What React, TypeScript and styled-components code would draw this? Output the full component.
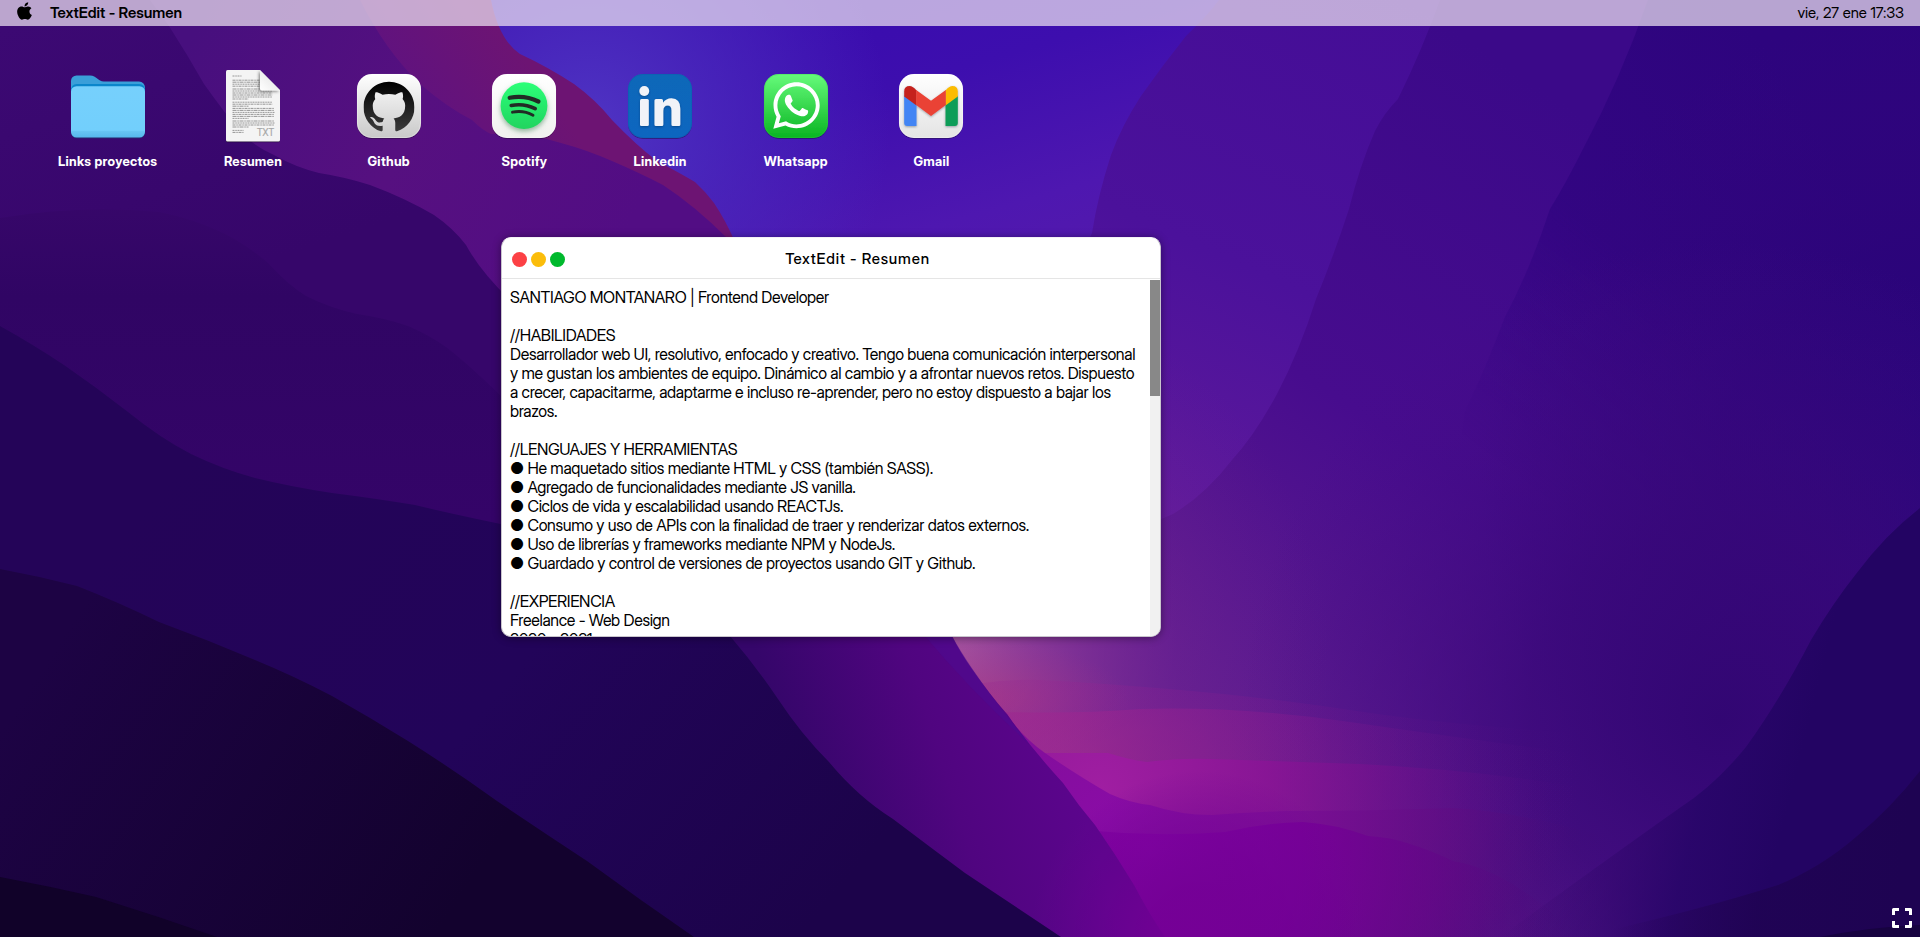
import React from "react";
import styled, { createGlobalStyle } from "styled-components";
import { FaApple, FaWhatsapp } from "react-icons/fa";
import { SiGithub } from "react-icons/si";

const GlobalStyle = createGlobalStyle`
  * { box-sizing: border-box; }
  body { margin: 0; overflow: hidden; font-family: "Inter Display", Inter, "Liberation Sans", sans-serif; }
`;

const Desktop = styled.div`
  position: relative;
  isolation: isolate;
  display: flex;
  flex-direction: column;
  width: 100%;
  height: 100vh;
  overflow: hidden;
  background: #22045a;
`;

const WallpaperSvg = styled.svg`
  position: absolute;
  inset: 0;
  z-index: -1;
  width: 100%;
  height: 100%;
`;

const MenuBar = styled.header`
  display: flex;
  flex: none;
  align-items: center;
  height: 26px;
  padding: 0 16px 2px 15px;
  background: rgba(239, 230, 244, 0.71);
  color: #000;
  font-size: 15px;
`;

const AppleMark = styled(FaApple)`
  width: 19px;
  height: 20px;
  margin: -2px 16px 0 0;
`;

const ActiveApp = styled.span`
  font-weight: 600;
  letter-spacing: -0.03px;
`;

const Clock = styled.time`
  margin-left: auto;
  letter-spacing: -0.07px;
`;

const Shortcuts = styled.nav`
  display: flex;
  gap: 55.7px;
  padding: 40px 58px 0;
`;

const Shortcut = styled.a`
  display: flex;
  flex-direction: column;
  align-items: center;
  min-width: 80px;
  color: #fff;
`;

const Glyph = styled.svg`
  display: block;
  width: 80px;
  height: 80px;
  overflow: visible;
`;

const ShortcutLabel = styled.span`
  margin-top: 7px;
  font-size: 13px;
  font-weight: 700;
  line-height: 16px;
  letter-spacing: 0.28px;
  white-space: nowrap;
`;

const Window = styled.section`
  position: absolute;
  left: 501px;
  top: 237px;
  display: flex;
  flex-direction: column;
  width: 660px;
  height: 400px;
  overflow: hidden;
  border: 1px solid #c9c5cd;
  border-top-color: #f3f0f5;
  border-radius: 10px;
  background: #fff;
  box-shadow: 0 1px 9px rgba(0, 0, 0, 0.4);
`;

const TitleBar = styled.header`
  display: flex;
  flex: none;
  align-items: center;
  height: 41px;
  padding: 3px 10px 0;
  border-bottom: 1px solid #e5e5e5;
`;

const WindowButtons = styled.div`
  display: flex;
  gap: 4px;
`;

const WindowButton = styled.span<{ $color: string }>`
  width: 15px;
  height: 15px;
  border-radius: 50%;
  background: ${(p) => p.$color};
`;

const Title = styled.h1`
  flex: 1;
  margin: 0;
  padding-bottom: 2px;
  font-size: 15px;
  font-weight: 500;
  letter-spacing: 0.8px;
  text-align: center;
`;

const Body = styled.div`
  display: flex;
  flex: 1;
  min-height: 0;
  padding-top: 1px;
`;

const Document = styled.div`
  flex: 1;
  overflow: hidden;
  padding: 8px 8px 0;
  font-size: 16px;
  line-height: 19px;
  letter-spacing: -0.34px;
  color: #000;
`;

const Line = styled.p`
  min-height: 19px;
  margin: 0;
`;

const ScrollTrack = styled.div`
  flex: none;
  width: 10px;
  background: #f1f1f1;
`;

const ScrollThumb = styled.div`
  height: 116px;
  background: #888;
`;

const FullscreenButton = styled.button`
  position: absolute;
  right: 8px;
  bottom: 9px;
  width: 20px;
  height: 20px;
  padding: 0;
  border: 0;
  background: none;
`;

function Wallpaper() {
  return (
    <WallpaperSvg viewBox="0 0 1920 937" preserveAspectRatio="none" aria-hidden="true">
      <defs>
        <linearGradient id="sky" gradientUnits="userSpaceOnUse" x1="800" y1="0" x2="1000" y2="700">
          <stop offset="0" stopColor="#390cae" />
          <stop offset=".15" stopColor="#3d0eae" />
          <stop offset=".35" stopColor="#4e17b0" />
          <stop offset="1" stopColor="#6a2596" />
        </linearGradient>
        <radialGradient id="skyGlow" gradientUnits="userSpaceOnUse" cx="590" cy="130" r="300">
          <stop offset="0" stopColor="#4f35c4" />
          <stop offset=".4" stopColor="#4c2dbf" stopOpacity=".7" />
          <stop offset="1" stopColor="#4e2dc0" stopOpacity="0" />
        </radialGradient>
        <linearGradient id="r1" gradientUnits="userSpaceOnUse" x1="1400" y1="0" x2="1150" y2="560">
          <stop offset="0" stopColor="#440d96" />
          <stop offset=".5" stopColor="#4b119b" />
          <stop offset="1" stopColor="#611b9c" />
        </linearGradient>
        <linearGradient id="r2" gradientUnits="userSpaceOnUse" x1="1560" y1="100" x2="1150" y2="720">
          <stop offset="0" stopColor="#3b0989" />
          <stop offset=".5" stopColor="#470c8e" />
          <stop offset="1" stopColor="#63208f" />
        </linearGradient>
        <linearGradient id="r3" gradientUnits="userSpaceOnUse" x1="1800" y1="100" x2="1450" y2="330">
          <stop offset="0" stopColor="#2d047e" />
          <stop offset="1" stopColor="#360684" />
        </linearGradient>
        <linearGradient id="r3fade" gradientUnits="userSpaceOnUse" x1="1660" y1="270" x2="1510" y2="470">
          <stop offset="0" stopColor="#fff" />
          <stop offset="1" stopColor="#000" />
        </linearGradient>
        <mask id="r3mask"><rect width="1920" height="937" fill="url(#r3fade)" /></mask>
        <radialGradient id="eastShade" gradientUnits="userSpaceOnUse" cx="1960" cy="480" r="480">
          <stop offset="0" stopColor="#23047a" />
          <stop offset=".5" stopColor="#2b0479" stopOpacity=".7" />
          <stop offset="1" stopColor="#34067b" stopOpacity="0" />
        </radialGradient>
        <radialGradient id="southShade" gradientUnits="userSpaceOnUse" cx="1720" cy="720" r="480">
          <stop offset="0" stopColor="#310672" stopOpacity=".95" />
          <stop offset=".4" stopColor="#380878" stopOpacity=".75" />
          <stop offset="1" stopColor="#440c84" stopOpacity="0" />
        </radialGradient>
        <radialGradient id="haze" gradientUnits="userSpaceOnUse" cx="950" cy="660" r="380">
          <stop offset="0" stopColor="#a8569f" />
          <stop offset=".25" stopColor="#95409a" stopOpacity=".7" />
          <stop offset=".6" stopColor="#782694" stopOpacity=".3" />
          <stop offset="1" stopColor="#6b2092" stopOpacity="0" />
        </radialGradient>
        <radialGradient id="blush" gradientUnits="userSpaceOnUse" cx="980" cy="700" r="150" gradientTransform="translate(0 420) scale(1 .4)">
          <stop offset="0" stopColor="#b03a80" stopOpacity=".6" />
          <stop offset="1" stopColor="#a0308a" stopOpacity="0" />
        </radialGradient>
        <radialGradient id="pink" gradientUnits="userSpaceOnUse" cx="1060" cy="765" r="520" gradientTransform="translate(0 306) scale(1 .6)">
          <stop offset="0" stopColor="#ab2b90" stopOpacity=".95" />
          <stop offset=".45" stopColor="#8c1a90" stopOpacity=".6" />
          <stop offset="1" stopColor="#560e86" stopOpacity="0" />
        </radialGradient>
        <radialGradient id="band" gradientUnits="userSpaceOnUse" cx="1100" cy="790" r="480">
          <stop offset="0" stopColor="#a01ea2" />
          <stop offset=".35" stopColor="#8a1496" stopOpacity=".85" />
          <stop offset=".7" stopColor="#6c0f8a" stopOpacity=".4" />
          <stop offset="1" stopColor="#4a0c80" stopOpacity="0" />
        </radialGradient>
        <radialGradient id="magenta" gradientUnits="userSpaceOnUse" cx="1110" cy="820" r="500">
          <stop offset="0" stopColor="#8a0ca6" />
          <stop offset=".3" stopColor="#7f0e98" stopOpacity=".95" />
          <stop offset=".7" stopColor="#5e0c82" stopOpacity=".55" />
          <stop offset="1" stopColor="#3a0b74" stopOpacity="0" />
        </radialGradient>
        <radialGradient id="magentaDeep" gradientUnits="userSpaceOnUse" cx="1150" cy="850" r="430">
          <stop offset="0" stopColor="#8603a5" />
          <stop offset=".35" stopColor="#770098" stopOpacity=".95" />
          <stop offset=".65" stopColor="#640488" stopOpacity=".6" />
          <stop offset="1" stopColor="#480a78" stopOpacity="0" />
        </radialGradient>
        <radialGradient id="magentaSpill" gradientUnits="userSpaceOnUse" cx="1200" cy="940" r="170">
          <stop offset="0" stopColor="#750096" />
          <stop offset=".3" stopColor="#720094" stopOpacity=".8" />
          <stop offset="1" stopColor="#6a0092" stopOpacity="0" />
        </radialGradient>
        <linearGradient id="r4" gradientUnits="userSpaceOnUse" x1="1800" y1="760" x2="1560" y2="700">
          <stop offset="0" stopColor="#230463" />
          <stop offset=".35" stopColor="#270568" stopOpacity=".85" />
          <stop offset="1" stopColor="#3a086e" stopOpacity="0" />
        </linearGradient>
        <linearGradient id="r5" gradientUnits="userSpaceOnUse" x1="1900" y1="900" x2="1620" y2="870">
          <stop offset="0" stopColor="#1e0352" />
          <stop offset=".5" stopColor="#1f0351" stopOpacity=".8" />
          <stop offset="1" stopColor="#25044f" stopOpacity="0" />
        </linearGradient>
        <linearGradient id="crimson" gradientUnits="userSpaceOnUse" x1="400" y1="130" x2="520" y2="50">
          <stop offset="0" stopColor="#5d1281" />
          <stop offset="1" stopColor="#6d1473" />
        </linearGradient>
        <linearGradient id="plum" gradientUnits="userSpaceOnUse" x1="180" y1="60" x2="600" y2="280">
          <stop offset="0" stopColor="#470f7e" />
          <stop offset=".5" stopColor="#561080" />
          <stop offset="1" stopColor="#520d84" />
        </linearGradient>
        <linearGradient id="l1" gradientUnits="userSpaceOnUse" x1="0" y1="30" x2="100" y2="320">
          <stop offset="0" stopColor="#3c0973" />
          <stop offset="1" stopColor="#36066a" />
        </linearGradient>
        <linearGradient id="l2" gradientUnits="userSpaceOnUse" x1="0" y1="200" x2="0" y2="520">
          <stop offset="0" stopColor="#37076a" />
          <stop offset=".3" stopColor="#300564" />
          <stop offset="1" stopColor="#340468" />
        </linearGradient>
        <linearGradient id="l3" gradientUnits="userSpaceOnUse" x1="200" y1="440" x2="800" y2="937">
          <stop offset="0" stopColor="#240458" />
          <stop offset=".5" stopColor="#220459" />
          <stop offset="1" stopColor="#1c034a" />
        </linearGradient>
        <linearGradient id="l4" gradientUnits="userSpaceOnUse" x1="60" y1="640" x2="460" y2="900">
          <stop offset="0" stopColor="#1d0344" />
          <stop offset="1" stopColor="#13022e" />
        </linearGradient>
        <linearGradient id="valley" gradientUnits="userSpaceOnUse" x1="790" y1="760" x2="1040" y2="680">
          <stop offset="0" stopColor="#35066a" />
          <stop offset=".55" stopColor="#500580" />
          <stop offset="1" stopColor="#5b058c" />
        </linearGradient>
      </defs>
      <rect width="1920" height="937" fill="url(#sky)" />
      <rect width="1920" height="937" fill="url(#skyGlow)" />
      <path fill="url(#r1)" d="M1219 0Q1208 15 1186 36Q1162 66 1141 96Q1122 125 1111 155Q1098 195 1092 233L900 630V937H1920V0Z" />
      <path fill="url(#r2)" d="M1440 0Q1422 50 1398 99Q1384 113 1375 131Q1360 165 1349 209Q1334 255 1316 299Q1300 350 1277 394Q1255 435 1232 460Q1205 495 1173 514L900 630V937H1920V0Z" />
      <g mask="url(#r3mask)">
        <path fill="url(#r3)" d="M1648 0Q1620 80 1583 149Q1565 185 1550 209Q1530 270 1505 317Q1485 370 1465 412L1400 937H1920V0Z" />
      </g>
      <rect width="1920" height="937" fill="url(#eastShade)" />
      <rect width="1920" height="937" fill="url(#southShade)" />
      <rect width="1920" height="937" fill="url(#haze)" />
      <rect width="1920" height="937" fill="url(#blush)" />
      <path fill="url(#pink)" opacity=".3" d="M940 690Q1000 678 1040 680Q1220 690 1350 710T1700 740V937H900Z" />
      <path fill="url(#pink)" opacity=".6" d="M1000 712Q1080 714 1140 709Q1240 706 1350 722T1700 770V937H900Z" />
      <path fill="url(#band)" d="M1040 753H1108Q1130 760 1147 762Q1180 758 1210 759L1360 764Q1480 770 1600 790V937H1000Z" />
      <path fill="url(#magenta)" d="M1007 714Q1020 735 1045 753Q1080 777 1110 794Q1130 803 1150 805Q1180 815 1212 815Q1250 812 1290 811Q1370 811 1453 808Q1530 812 1650 850V937H950Z" />
      <path fill="url(#magentaDeep)" d="M1095 831Q1160 837 1225 832Q1265 823 1303 822Q1335 824 1368 836Q1390 837 1410 844Q1430 850 1453 861Q1510 870 1580 937H1080Z" />
      <path fill="url(#r4)" d="M1920 508Q1885 535 1856 574Q1833 603 1811 640Q1780 700 1746 747Q1715 785 1681 807Q1620 850 1500 937H1920Z" />
      <path fill="url(#r5)" d="M1920 771Q1892 807 1856 837Q1820 868 1778 885Q1700 910 1580 937H1920Z" />
      <path fill="#170340" d="M1820 937Q1870 927 1920 925V937Z" />

      <path fill="url(#valley)" d="M700 600H935Q945 618 952 636Q960 652 972 669Q990 695 1007 714Q1030 747 1063 783Q1078 805 1095 825Q1116 855 1134 885Q1148 912 1165 937H900L700 700Z" />
      <path fill="#4b0b92" opacity=".5" d="M925 636H952Q968 665 1000 707L1030 745Q970 690 925 636Z" />
      <rect width="1920" height="937" fill="url(#magentaSpill)" />
      <path fill="url(#crimson)" d="M0 0H491Q499 40 520 54Q548 67 574 84Q596 100 612 120Q636 145 657 161Q678 172 695 182Q706 192 714 203Q726 221 735 242V330H500Z" />
      <path fill="url(#plum)" d="M0 0H360Q385 50 420 84Q448 108 472 120Q482 130 491 134Q530 133 561 143Q587 150 612 161Q640 173 663 185Q695 206 727 238V400H500Z" />
      <path fill="url(#l1)" d="M0 0H150L169 26Q187 54 204 84Q224 112 242 134Q256 147 274 155Q295 167 319 173Q345 177 370 185Q405 198 434 215Q453 228 466 245Q480 271 510 300V640H0Z" />
      <path fill="url(#l2)" d="M0 218Q80 205 159 212Q194 219 223 233Q247 245 268 263Q288 285 306 296Q330 308 357 314Q385 318 408 326Q429 335 446 347Q473 368 510 405V640H0Z" />
      <path fill="url(#l3)" d="M0 326Q34 345 64 365Q96 387 128 412Q160 438 191 454Q222 469 255 478Q292 487 332 493Q372 498 415 505Q460 516 540 532L705 605Q720 620 730 636Q755 665 778 699Q801 734 829 762Q858 797 893 819Q930 847 965 873Q1010 903 1061 937H0Z" />
      <path fill="url(#l4)" d="M0 569Q38 576 77 586Q118 602 159 622Q208 640 255 660Q294 676 332 696Q371 718 408 741Q454 770 497 801Q543 832 587 861Q640 900 694 937H0Z" />
      <path fill="#110229" d="M0 877Q48 886 96 897Q157 916 217 937H0Z" />
    </WallpaperSvg>
  );
}

function FolderIcon() {
  return (
    <Glyph viewBox="0 0 80 80">
      <defs>
        <linearGradient id="folderFront" x1="0" y1="0" x2="0" y2="1">
          <stop offset="0" stopColor="#76d0fc" />
          <stop offset=".86" stopColor="#72cffc" />
          <stop offset=".88" stopColor="#67c5f3" />
          <stop offset="1" stopColor="#57b8ec" />
        </linearGradient>
      </defs>
      <path d="M3 66v.500a6 6 0 0 0 6 6h62a6 6 0 0 0 6-6V66z" fill="#1f2f6c" opacity=".8" />
      <path d="M3 15a5.500 5.500 0 0 1 5.500-5.500H22c7 0 7.500 6 14 6h35a6 6 0 0 1 6 6v24H3z" fill="#3a9fd9" />
      <path d="M3 25q0-7 6-7h62q6 0 6 7v10H3z" fill="#0a86cb" />
      <path d="M8.500 20.200h63a5.500 5.500 0 0 1 5.500 5.500V66a5.500 5.500 0 0 1-5.500 5.500H8.500A5.500 5.500 0 0 1 3 66V25.700a5.500 5.500 0 0 1 5.500-5.500z" fill="url(#folderFront)" />
    </Glyph>
  );
}

const paragraphs = [
  { top: 10, count: 1, width: 9 },
  { top: 14.2, count: 4, width: 29 },
  { top: 23, count: 6, width: 40 },
  { top: 36.2, count: 3, width: 40 },
  { top: 42.4, count: 6, width: 42 },
  { top: 55, count: 4, width: 42 },
  { top: 64.4, count: 2, width: 11 },
];

function TextFileIcon() {
  return (
    <Glyph viewBox="0 0 80 80">
      <defs>
        <linearGradient id="fold" x1="0" y1="1" x2="1" y2="0">
          <stop offset="0" stopColor="#fff" />
          <stop offset=".5" stopColor="#eee" />
          <stop offset="1" stopColor="#ccc" />
        </linearGradient>
        <clipPath id="page"><path d="M14.500 4H47L67 24V74a1.500 1.500 0 0 1-1.500 1.500H14.500A1.500 1.500 0 0 1 13 74V5.500A1.500 1.500 0 0 1 14.500 4z" /></clipPath>
        <filter id="foldShadow" x="-50%" y="-50%" width="200%" height="200%"><feDropShadow dx="-1" dy="1" stdDeviation="1.800" floodOpacity=".5" /></filter>
      </defs>
      <path transform="translate(0 .8)" d="M14.500 4H47L67 24V74a1.500 1.500 0 0 1-1.500 1.500H14.500A1.500 1.500 0 0 1 13 74V5.500A1.500 1.500 0 0 1 14.500 4z" fill="#111" opacity=".6" />
      <g clipPath="url(#page)">
        <rect x="13" y="4" width="54" height="72" fill="#f4f4f4" />
        {paragraphs.map(({ top, count, width }, p) =>
          Array.from({ length: count }, (_, i) => (
            <path
              key={`${p}-${i}`}
              d={`M19.500 ${top + i * 2}h${i === count - 1 && p > 1 ? Math.min(width, 16) : width}`}
              stroke="#444"
              strokeWidth=".9"
              strokeDasharray={`${2 + ((i + p) % 3)} .8 1.500 .7`}
              opacity=".6"
            />
          ))
        )}
        <path d="M47 4L67 24.500H49a2 2 0 0 1-2-2z" fill="url(#fold)" filter="url(#foldShadow)" />
      </g>
      <text x="44" y="70" fontSize="10.500" fill="#a6a6a6" stroke="#a6a6a6" strokeWidth=".2" textLength="17.200" lengthAdjust="spacingAndGlyphs">TXT</text>
    </Glyph>
  );
}

interface TileProps {
  id: string;
  from: string;
  to: string;
  edge?: string;
  children: React.ReactNode;
}

function TileIcon({ id, from, to, edge = "#fff", children }: TileProps) {
  return (
    <Glyph viewBox="0 0 80 80">
      <defs>
        <linearGradient id={id} x1="0" y1="0" x2="0" y2="1">
          <stop offset="0" stopColor={from} />
          <stop offset="1" stopColor={to} />
        </linearGradient>
        <filter id={`${id}Drop`} x="-20%" y="-20%" width="140%" height="150%">
          <feDropShadow dx="0" dy=".8" stdDeviation=".7" floodOpacity=".4" />
        </filter>
      </defs>
      <rect x="8" y="8" width="64" height="64" rx="15" fill={`url(#${id})`} filter={`url(#${id}Drop)`} />
      <rect x="8.400" y="8.400" width="63.200" height="63.200" rx="14.600" fill="none" stroke={edge} strokeOpacity=".4" strokeWidth=".8" />
      {children}
    </Glyph>
  );
}

function GithubIcon() {
  return (
    <TileIcon id="ghTile" from="#ffffff" to="#c9c9c9">
      <defs>
        <linearGradient id="ghInk" x1="0" y1="0" x2="0" y2="1">
          <stop offset="0" stopColor="#000" />
          <stop offset="1" stopColor="#3c3c3c" />
        </linearGradient>
      </defs>
      <SiGithub x={14.5} y={15} size={51} fill="url(#ghInk)" />
    </TileIcon>
  );
}

function SpotifyIcon() {
  return (
    <TileIcon id="spTile" from="#ffffff" to="#f1f1ee">
      <defs>
        <linearGradient id="spDisc" x1="0" y1="0" x2="0" y2="1">
          <stop offset="0" stopColor="#2cff78" />
          <stop offset="1" stopColor="#20d45f" />
        </linearGradient>
        <filter id="spDrop" x="-30%" y="-30%" width="160%" height="170%">
          <feDropShadow dx="0" dy="2.500" stdDeviation="2.500" floodColor="#4b8a60" floodOpacity=".6" />
        </filter>
      </defs>
      <circle cx="40" cy="39.700" r="23.400" fill="url(#spDisc)" filter="url(#spDrop)" />
      <g fill="none" stroke="#222b25" strokeLinecap="round">
        <path d="M25.700 31.800q15-3 28.700 3.700" strokeWidth="4.200" />
        <path d="M27.200 39.500q12.500-2.600 24 3.200" strokeWidth="3.600" />
        <path d="M28.500 46.200q11-2.200 20.500 3" strokeWidth="2.900" />
      </g>
    </TileIcon>
  );
}

function LinkedinIcon() {
  return (
    <TileIcon id="inTile" from="#1167b8" to="#0c66c0" edge="#0d5aa4">
      <defs>
        <filter id="inDrop" x="-30%" y="-30%" width="160%" height="170%">
          <feDropShadow dx="0" dy="1" stdDeviation="1" floodColor="#042c5c" floodOpacity=".5" />
        </filter>
      </defs>
      <g filter="url(#inDrop)" fill="#f1f3f8">
        <circle cx="24.300" cy="25" r="4.900" />
        <rect x="20" y="33" width="8.800" height="27" rx="1.500" />
        <path d="M36 33h5.500q1.500 0 1.500 1.500v2.200q3-4.500 8.500-4.500 8.800 0 8.800 10.500V58.500q0 1.500-1.500 1.500h-5.800q-1.500 0-1.500-1.500V44.500q0-5-3.800-5-4.400 0-4.400 5.500V58.500q0 1.500-1.500 1.500H36q-1.500 0-1.500-1.500v-24q0-1.500 1.500-1.500z" />
      </g>
    </TileIcon>
  );
}

function WhatsappIcon() {
  return (
    <TileIcon id="waTile" from="#66fb7b" to="#0ab522" edge="#36c94c">
      <FaWhatsapp x={14} y={13} size={53} fill="#fff" />
    </TileIcon>
  );
}

function GmailIcon() {
  return (
    <TileIcon id="gmTile" from="#ffffff" to="#e4e4e4">
      <defs>
        <filter id="gmDrop" x="-20%" y="-20%" width="140%" height="150%">
          <feDropShadow dx="0" dy="1" stdDeviation="1" floodColor="#345" floodOpacity=".45" />
        </filter>
      </defs>
      <g filter="url(#gmDrop)">
        <path fill="#4285f4" d="M13.200 29.500L25.500 38V60H16.200a3 3 0 0 1-3-3z" />
        <path fill="#0f9d58" d="M66.800 29.500L54.500 38V60H63.800a3 3 0 0 0 3-3z" />
        <path fill="#fbbc04" d="M54.500 24.500Q58 20 61.500 20q5.300 0 5.300 5.500V30.500L54.500 39.500z" />
        <path fill="#c5221f" d="M25.500 24.500Q22 20 18.500 20q-5.300 0-5.300 5.500V30.500L25.500 39.500z" />
        <path fill="#ea4335" d="M25.200 24L40 34.800 54.800 24V39L40 50 25.200 39z" />
      </g>
    </TileIcon>
  );
}

const shortcuts = [
  { name: "Links proyectos", Icon: FolderIcon },
  { name: "Resumen", Icon: TextFileIcon },
  { name: "Github", Icon: GithubIcon },
  { name: "Spotify", Icon: SpotifyIcon },
  { name: "Linkedin", Icon: LinkedinIcon },
  { name: "Whatsapp", Icon: WhatsappIcon },
  { name: "Gmail", Icon: GmailIcon },
];

const skills = [
  "He maquetado sitios mediante HTML y CSS (también SASS).",
  "Agregado de funcionalidades mediante JS vanilla.",
  "Ciclos de vida y escalabilidad usando REACTJs.",
  "Consumo y uso de APIs con la finalidad de traer y renderizar datos externos.",
  "Uso de librerías y frameworks mediante NPM y NodeJs.",
  "Guardado y control de versiones de proyectos usando GIT y Github.",
];

export default function App() {
  return (
    <>
      <GlobalStyle />
      <Desktop>
        <Wallpaper />
        <MenuBar>
          <AppleMark />
          <ActiveApp>TextEdit - Resumen</ActiveApp>
          <Clock>vie, 27 ene 17:33</Clock>
        </MenuBar>
        <Shortcuts>
          {shortcuts.map(({ name, Icon }) => (
            <Shortcut key={name}>
              <Icon />
              <ShortcutLabel>{name}</ShortcutLabel>
            </Shortcut>
          ))}
        </Shortcuts>
        <Window>
          <TitleBar>
            <WindowButtons>
              <WindowButton $color="#fc4145" />
              <WindowButton $color="#fbbd0b" />
              <WindowButton $color="#00b92d" />
            </WindowButtons>
            <Title>TextEdit - Resumen</Title>
          </TitleBar>
          <Body>
            <Document>
              <Line>SANTIAGO MONTANARO | Frontend Developer</Line>
              <Line />
              <Line>//HABILIDADES</Line>
              <Line>
                Desarrollador web UI, resolutivo, enfocado y creativo. Tengo buena comunicación interpersonal
                y me gustan los ambientes de equipo. Dinámico al cambio y a afrontar nuevos retos. Dispuesto
                a crecer, capacitarme, adaptarme e incluso re-aprender, pero no estoy dispuesto a bajar los
                brazos.
              </Line>
              <Line />
              <Line>//LENGUAJES Y HERRAMIENTAS</Line>
              {skills.map((skill) => (
                <Line key={skill}>● {skill}</Line>
              ))}
              <Line />
              <Line>//EXPERIENCIA</Line>
              <Line>Freelance - Web Design</Line>
              <Line>2020 - 2021</Line>
            </Document>
            <ScrollTrack>
              <ScrollThumb />
            </ScrollTrack>
          </Body>
        </Window>
        <FullscreenButton aria-label="Pantalla completa">
          <svg viewBox="0 0 20 20" width="20" height="20" fill="none" stroke="#fff" strokeWidth="3" strokeLinejoin="round">
            <path d="M1.500 7V1.500H7M13 1.500H18.500V7M18.500 13V18.500H13M7 18.500H1.500V13" />
          </svg>
        </FullscreenButton>
      </Desktop>
    </>
  );
}
